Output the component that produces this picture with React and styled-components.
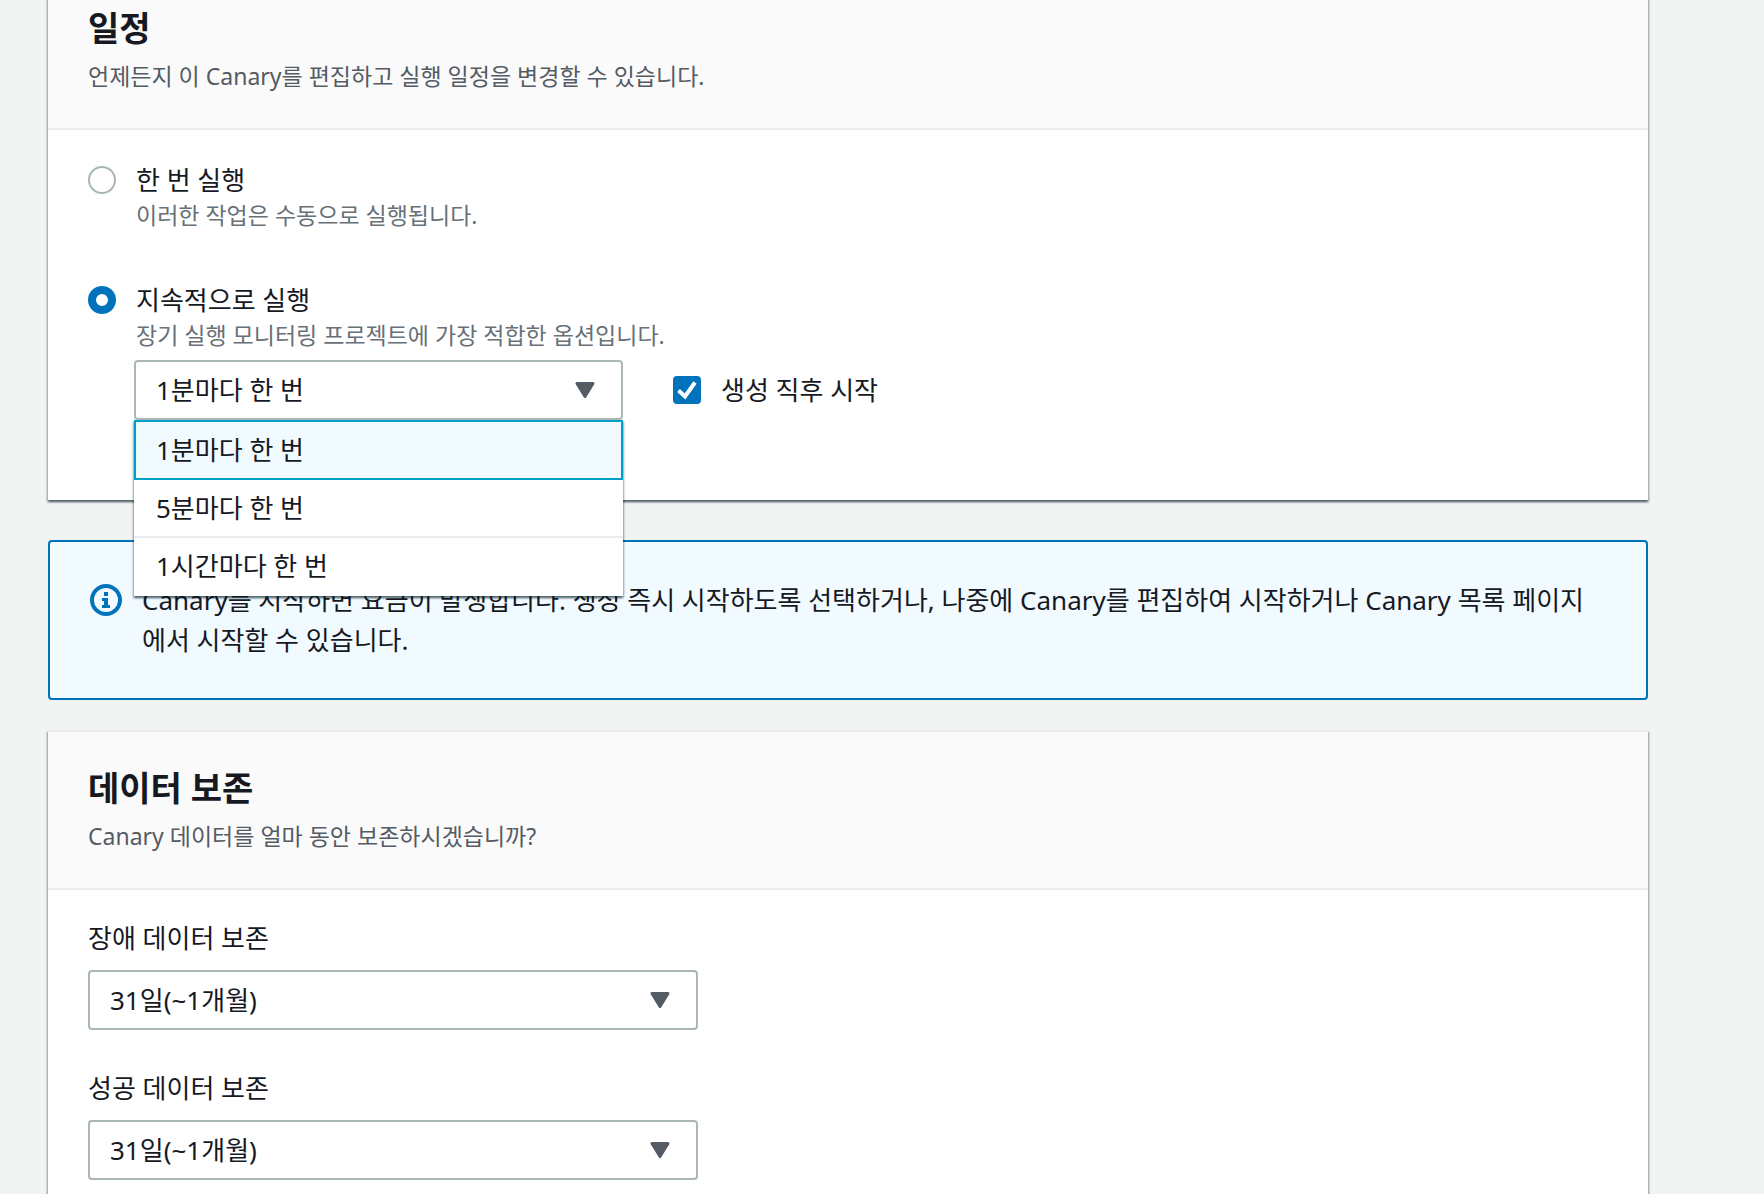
import React, { useState } from "react";
import styled, { createGlobalStyle } from "styled-components";

const GlobalStyle = createGlobalStyle`
  * {
    box-sizing: border-box;
  }
  body {
    margin: 0;
    background-color: #f2f3f3;
    color: #16191f;
    font-family: "Noto Sans", "Noto Sans CJK KR", sans-serif;
    font-size: 26px;
    line-height: 40px;
  }
`;

// The form is scrolled down slightly, so the first panel starts above the viewport
const Page = styled.main`
  height: 100vh;
  overflow: hidden;
`;

const Content = styled.div`
  margin: -30px 116px 0 48px;
  display: flex;
  flex-direction: column;
`;

const Panel = styled.section`
  background-color: #fff;
  border-top: 2px solid #eaeded;
  box-shadow: 0 2px 2px 0 rgba(0, 28, 36, 0.3),
    1px 2px 2px 0 rgba(0, 28, 36, 0.3), -1px 2px 2px 0 rgba(0, 28, 36, 0.3);
`;

const PanelHeader = styled.header`
  background-color: #fafafa;
  border-bottom: 2px solid #eaeded;
  padding: 32px 40px;
`;

const Title = styled.h2`
  margin: 0 0 4px;
  font-size: 34px;
  line-height: 48px;
  font-weight: 700;
`;

const Description = styled.p`
  margin: 0;
  font-size: 23px;
  color: #545b64;
`;

const ScheduleBody = styled.div`
  display: flex;
  flex-direction: column;
  gap: 50px;
  padding: 30px 40px 80px;
`;

const Choice = styled.div`
  display: grid;
  grid-template-columns: 28px 1fr;
  column-gap: 20px;
`;

const Radio = styled.input.attrs({ type: "radio" })`
  appearance: none;
  width: 28px;
  height: 28px;
  margin: 6px 0 0;
  border: 2px solid #aab7b8;
  border-radius: 50%;
  background-color: #fff;
  &:checked {
    border: 8px solid #0073bb;
  }
`;

const ChoiceLabel = styled.label`
  display: block;
`;

const Hint = styled.p`
  margin: 0;
  font-size: 23px;
  line-height: 30px;
  color: #687078;
`;

const FrequencyRow = styled.div`
  display: flex;
  align-items: center;
  gap: 50px;
  margin: 10px 0 0 -2px;
`;

const SelectBox = styled.div`
  position: relative;
  width: ${(props) => props.$width};
`;

const StyledSelect = styled.select`
  display: block;
  appearance: none;
  width: 100%;
  height: 60px;
  padding: 0 60px 0 20px;
  border: 2px solid #aab7b8;
  border-radius: 4px;
  background-color: #fff;
  color: #16191f;
  font: inherit;
`;

const Caret = styled.svg`
  position: absolute;
  top: 22px;
  right: 28px;
  width: 20px;
  height: 16px;
  fill: #545b64;
  stroke: #545b64;
  pointer-events: none;
`;

const Menu = styled.ul`
  position: absolute;
  top: 100%;
  left: 0;
  right: 0;
  z-index: 10;
  margin: 0;
  padding: 0;
  list-style: none;
  background-color: #fff;
  box-shadow: 0 2px 2px 0 rgba(0, 28, 36, 0.3),
    1px 2px 2px 0 rgba(0, 28, 36, 0.3), -1px 2px 2px 0 rgba(0, 28, 36, 0.3);
`;

const MenuItem = styled.li`
  padding: 8px 22px;
  border-bottom: 2px solid #eaeded;
  cursor: pointer;
  &:last-child {
    padding-bottom: 10px;
    border-bottom: none;
  }
  &[aria-selected="true"] {
    padding: 8px 20px;
    border: 2px solid #00a1c9;
    background-color: #f1faff;
  }
`;

const CheckLabel = styled.label`
  display: flex;
  align-items: center;
  gap: 20px;
`;

const CheckBox = styled.span`
  display: grid;
  width: 28px;
  height: 28px;
  > * {
    grid-area: 1 / 1;
  }
  svg {
    pointer-events: none;
  }
`;

const Check = styled.input.attrs({ type: "checkbox" })`
  appearance: none;
  width: 28px;
  height: 28px;
  margin: 0;
  border: 2px solid #aab7b8;
  border-radius: 4px;
  &:checked {
    border-color: #0073bb;
    background-color: #0073bb;
  }
`;

const InfoBox = styled.div`
  display: flex;
  gap: 20px;
  margin: 40px 0 30px;
  padding: 38px 46px 38px 40px;
  border: 2px solid #0073bb;
  border-radius: 4px;
  background-color: #f1faff;
`;

const InfoIcon = styled.svg`
  flex: none;
  width: 32px;
  height: 32px;
  margin-top: 4px;
`;

const InfoText = styled.p`
  margin: 0;
`;

const RetentionBody = styled.div`
  display: flex;
  flex-direction: column;
  gap: 38px;
  padding: 28px 40px 60px;
`;

const Field = styled.div`
  display: flex;
  flex-direction: column;
  gap: 12px;
`;

const frequencies = ["1분마다 한 번", "5분마다 한 번", "1시간마다 한 번"];

const retentionFields = [
  { id: "failure", label: "장애 데이터 보존" },
  { id: "success", label: "성공 데이터 보존" },
];

const Select = ({ width, children, menu, ...rest }) => (
  <SelectBox $width={width}>
    <StyledSelect {...rest}>{children}</StyledSelect>
    <Caret viewBox="0 0 20 16" aria-hidden="true">
      <path d="M2 1.5h16L10 14.5z" strokeWidth="3" strokeLinejoin="round" />
    </Caret>
    {menu}
  </SelectBox>
);

const App = () => {
  const [mode, setMode] = useState("continuous");
  const [frequency, setFrequency] = useState(frequencies[0]);
  const [menuOpen, setMenuOpen] = useState(true);
  const [startNow, setStartNow] = useState(true);

  const pickFrequency = (value) => {
    setFrequency(value);
    setMenuOpen(false);
  };

  return (
    <Page>
      <GlobalStyle />
      <Content>
        {/* Schedule */}
        <Panel>
          <PanelHeader>
            <Title>일정</Title>
            <Description>
              언제든지 이 Canary를 편집하고 실행 일정을 변경할 수 있습니다.
            </Description>
          </PanelHeader>
          <ScheduleBody>
            <Choice>
              <Radio
                id="run-once"
                name="mode"
                checked={mode === "once"}
                onChange={() => setMode("once")}
              />
              <div>
                <ChoiceLabel htmlFor="run-once">한 번 실행</ChoiceLabel>
                <Hint>이러한 작업은 수동으로 실행됩니다.</Hint>
              </div>
            </Choice>
            <Choice>
              <Radio
                id="run-continuously"
                name="mode"
                checked={mode === "continuous"}
                onChange={() => setMode("continuous")}
              />
              <div>
                <ChoiceLabel htmlFor="run-continuously">
                  지속적으로 실행
                </ChoiceLabel>
                <Hint>장기 실행 모니터링 프로젝트에 가장 적합한 옵션입니다.</Hint>
                <FrequencyRow>
                  <Select
                    width="489px"
                    aria-labelledby="run-continuously"
                    value={frequency}
                    onChange={(e) => pickFrequency(e.target.value)}
                    menu={
                      menuOpen && (
                        <Menu role="listbox">
                          {frequencies.map((item) => (
                            <MenuItem
                              key={item}
                              role="option"
                              aria-selected={item === frequency}
                              onClick={() => pickFrequency(item)}
                            >
                              {item}
                            </MenuItem>
                          ))}
                        </Menu>
                      )
                    }
                  >
                    {frequencies.map((item) => (
                      <option key={item}>{item}</option>
                    ))}
                  </Select>
                  <CheckLabel>
                    <CheckBox>
                      <Check
                        checked={startNow}
                        onChange={(e) => setStartNow(e.target.checked)}
                      />
                      <svg viewBox="0 0 28 28" fill="none" aria-hidden="true">
                        <path d="M5.5 14.5l6.5 6L22 6.5" stroke="#fff" strokeWidth="4" />
                      </svg>
                    </CheckBox>
                    생성 직후 시작
                  </CheckLabel>
                </FrequencyRow>
              </div>
            </Choice>
          </ScheduleBody>
        </Panel>

        <InfoBox>
          <InfoIcon viewBox="0 0 32 32" aria-hidden="true">
            <circle cx="16" cy="16" r="14" fill="none" stroke="#0073bb" strokeWidth="4" />
            <path
              d="M14 8h4v4h-4zM12 14h6v7h2v3h-8v-3h2v-4h-2z"
              fill="#0073bb"
            />
          </InfoIcon>
          <InfoText>
            Canary를 시작하면 요금이 발생합니다. 생성 즉시 시작하도록 선택하거나,
            나중에 Canary를 편집하여 시작하거나 Canary 목록 페이지에서 시작할 수
            있습니다.
          </InfoText>
        </InfoBox>

        {/* Data retention */}
        <Panel>
          <PanelHeader>
            <Title>데이터 보존</Title>
            <Description>Canary 데이터를 얼마 동안 보존하시겠습니까?</Description>
          </PanelHeader>
          <RetentionBody>
            {retentionFields.map((field) => (
              <Field key={field.id}>
                <label htmlFor={field.id}>{field.label}</label>
                <Select id={field.id} width="610px">
                  <option>31일(~1개월)</option>
                </Select>
              </Field>
            ))}
          </RetentionBody>
        </Panel>
      </Content>
    </Page>
  );
};

export default App;
